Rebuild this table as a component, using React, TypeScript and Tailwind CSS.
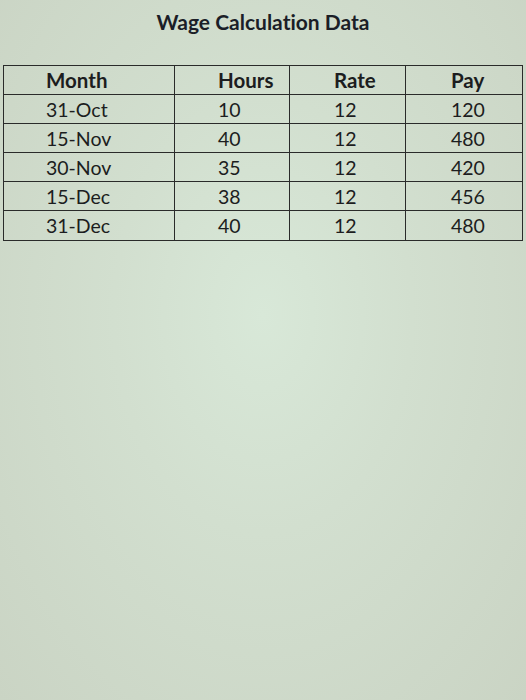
import React from "react";

const rows = [
  ["31-Oct", "10", "12", "120"],
  ["15-Nov", "40", "12", "480"],
  ["30-Nov", "35", "12", "420"],
  ["15-Dec", "38", "12", "456"],
  ["31-Dec", "40", "12", "480"],
];

export default function App() {
  return (
    <div
      className="h-[700px] w-[526px] overflow-hidden bg-[radial-gradient(ellipse_at_50%_45%,#d8e8d8_0%,#d2dfcf_40%,#cad4c4_100%)] text-[#1c1d20] [font-variant-ligatures:none]"
      style={{ fontFamily: "Lato, 'Open Sans', sans-serif" }}
    >
      <div className="flex h-[65px] justify-center pt-[9px]">
        <h1 className="text-[21px] font-bold leading-[26px] text-[#1b1e27]">
          Wage Calculation Data
        </h1>
      </div>
      <div className="ml-[3px] w-[520px] border-[1.5px] border-[#2a2b2a]">
        <div className="grid grid-cols-[171px_115px_116px_1fr] h-[29px] border-b-[1.5px] border-[#2a2b2a] text-[20.5px] font-bold leading-[29px]">
          <div className="border-r-[1.5px] border-[#2a2b2a] pl-[42px]">Month</div>
          <div className="border-r-[1.5px] border-[#2a2b2a] pl-[43px]">Hours</div>
          <div className="border-r-[1.5px] border-[#2a2b2a] pl-[44px]">Rate</div>
          <div className="pl-[45px]">Pay</div>
        </div>
        {rows.map((r, i) => (
          <div
            key={i}
            className={`grid grid-cols-[171px_115px_116px_1fr] h-[29px] text-[19.5px] leading-[29px] ${
              i < rows.length - 1 ? "border-b-[1.5px] border-[#2a2b2a]" : ""
            }`}
          >
            <div className="border-r-[1.5px] border-[#2a2b2a] pl-[42px]">{r[0]}</div>
            <div className="border-r-[1.5px] border-[#2a2b2a] pl-[43px]">{r[1]}</div>
            <div className="border-r-[1.5px] border-[#2a2b2a] pl-[44px]">{r[2]}</div>
            <div className="pl-[45px]">{r[3]}</div>
          </div>
        ))}
      </div>
    </div>
  );
}
